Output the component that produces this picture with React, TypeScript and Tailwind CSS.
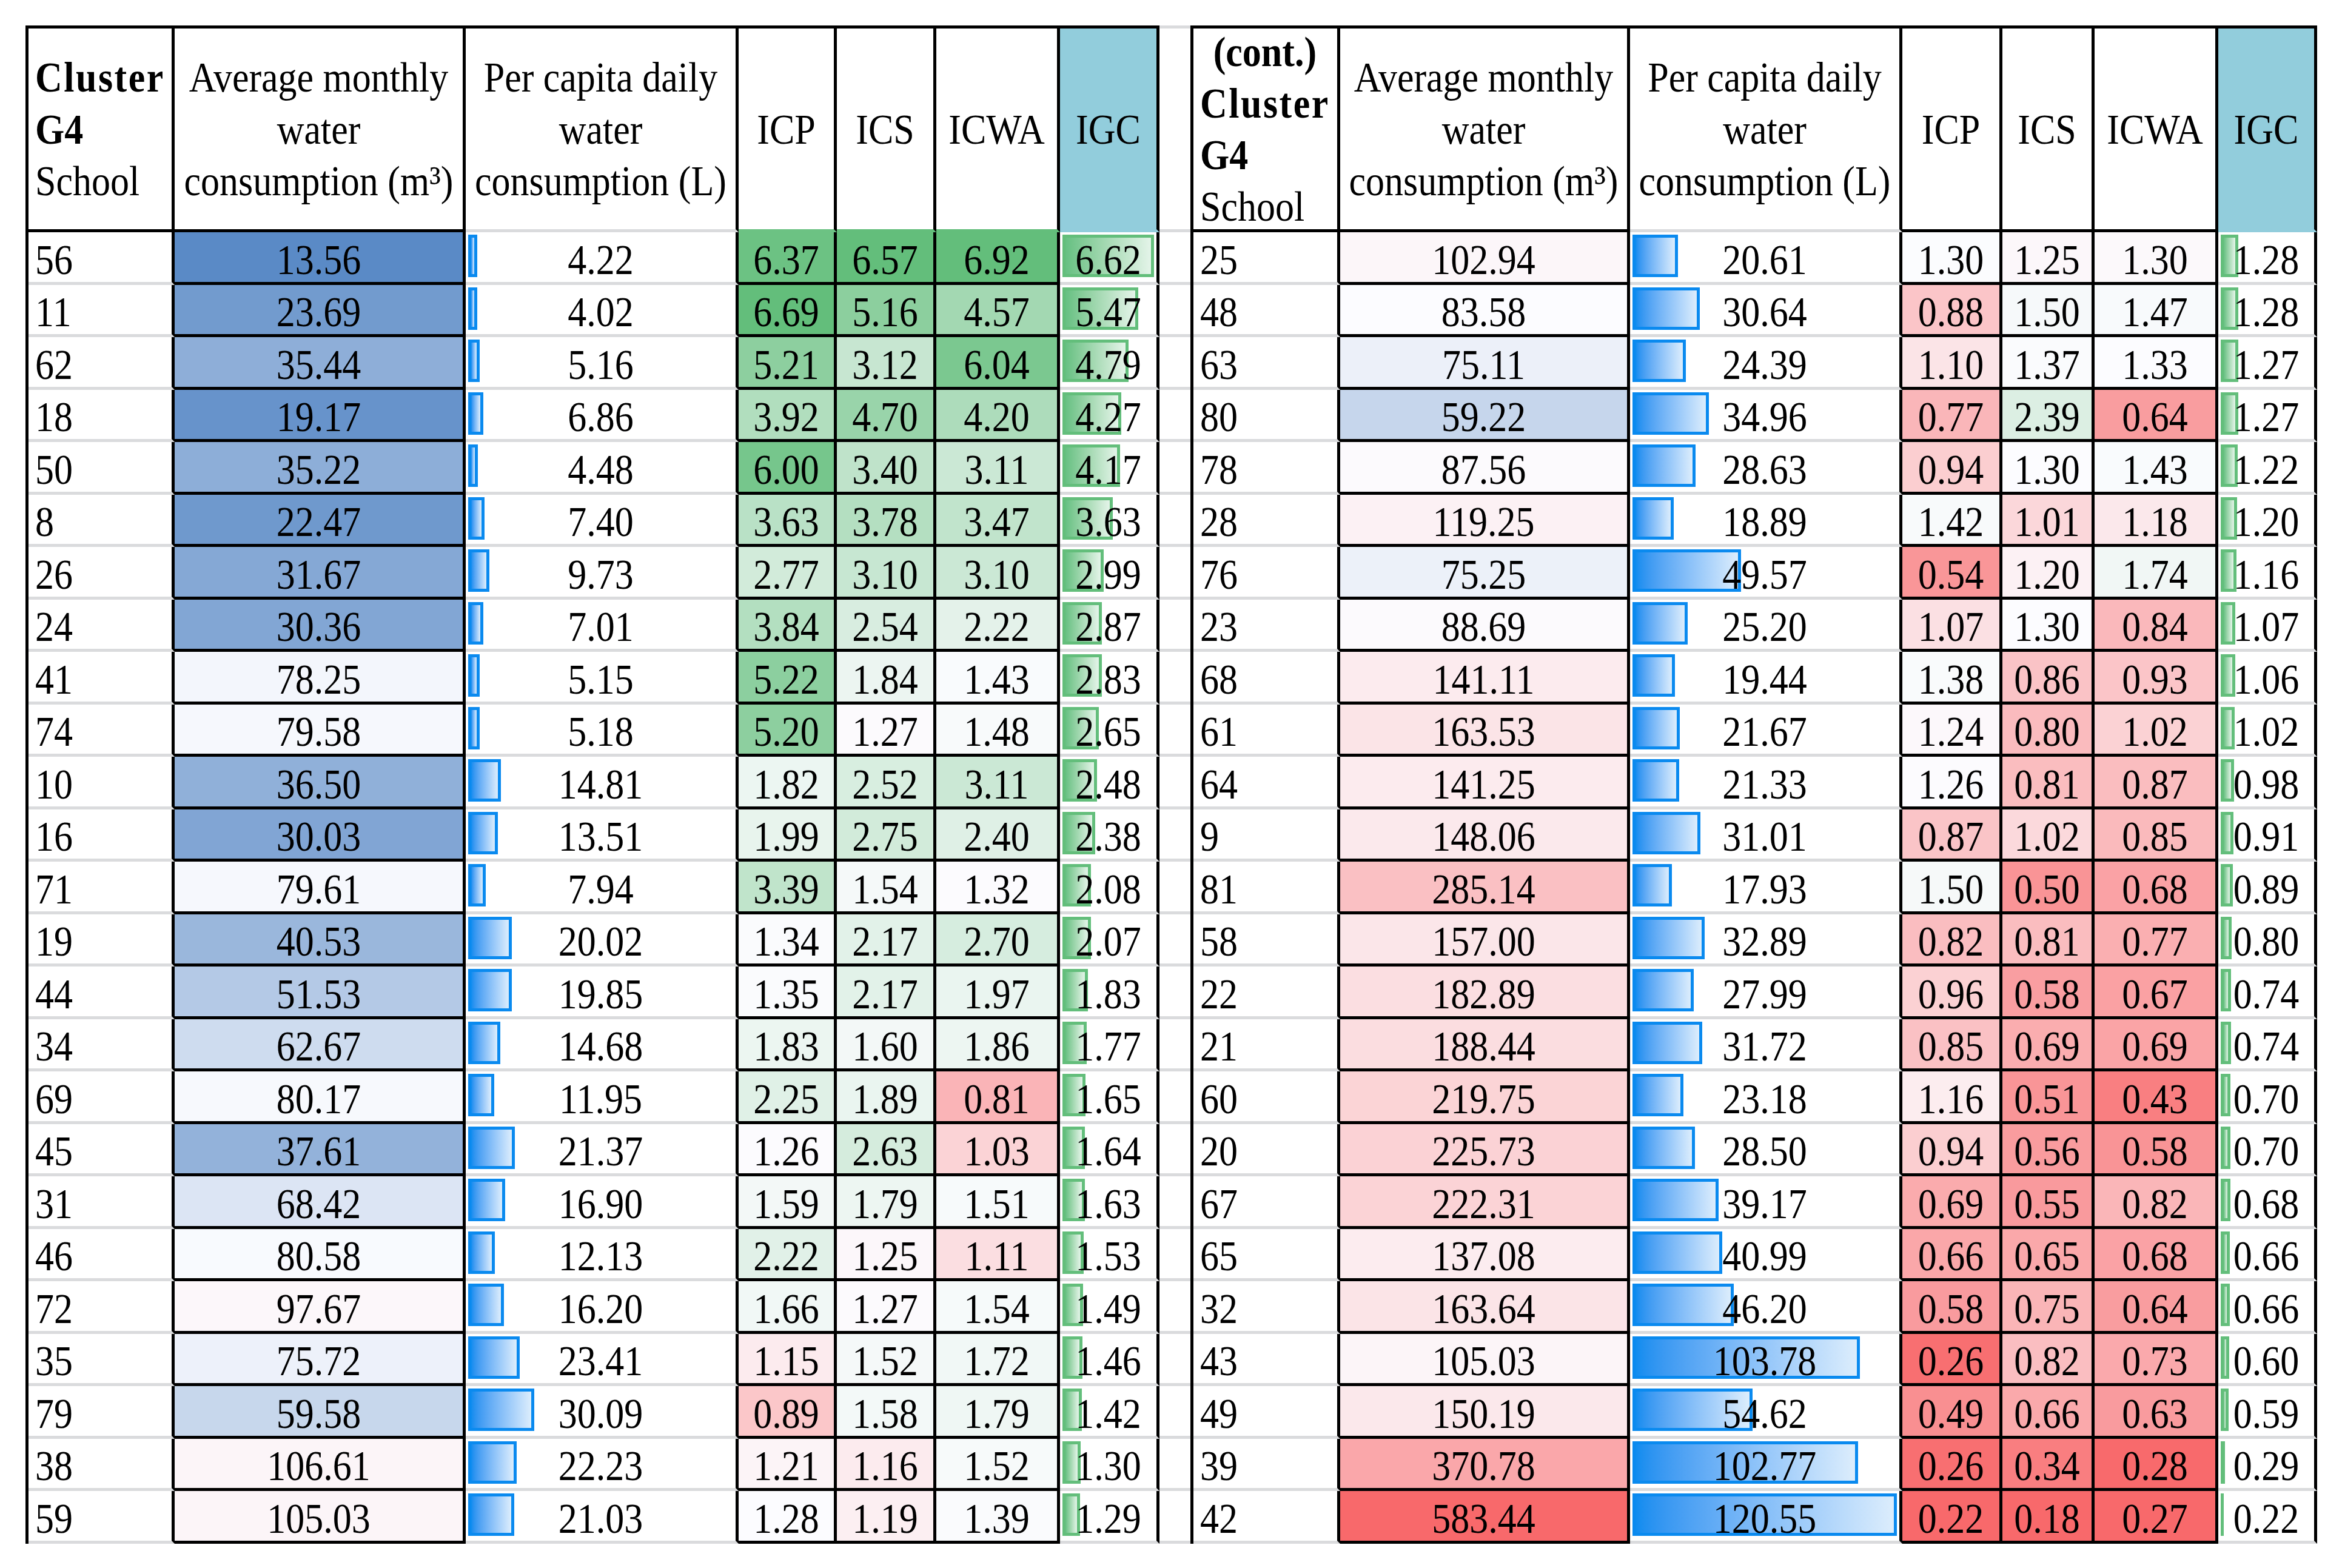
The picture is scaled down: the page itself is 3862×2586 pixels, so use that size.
import React from "react";

type Row = [string, number, number, number, number, number, number];

const T1: Row[] = [
  ["56", 13.56, 4.22, 6.37, 6.57, 6.92, 6.62],
  ["11", 23.69, 4.02, 6.69, 5.16, 4.57, 5.47],
  ["62", 35.44, 5.16, 5.21, 3.12, 6.04, 4.79],
  ["18", 19.17, 6.86, 3.92, 4.7, 4.2, 4.27],
  ["50", 35.22, 4.48, 6.0, 3.4, 3.11, 4.17],
  ["8", 22.47, 7.4, 3.63, 3.78, 3.47, 3.63],
  ["26", 31.67, 9.73, 2.77, 3.1, 3.1, 2.99],
  ["24", 30.36, 7.01, 3.84, 2.54, 2.22, 2.87],
  ["41", 78.25, 5.15, 5.22, 1.84, 1.43, 2.83],
  ["74", 79.58, 5.18, 5.2, 1.27, 1.48, 2.65],
  ["10", 36.5, 14.81, 1.82, 2.52, 3.11, 2.48],
  ["16", 30.03, 13.51, 1.99, 2.75, 2.4, 2.38],
  ["71", 79.61, 7.94, 3.39, 1.54, 1.32, 2.08],
  ["19", 40.53, 20.02, 1.34, 2.17, 2.7, 2.07],
  ["44", 51.53, 19.85, 1.35, 2.17, 1.97, 1.83],
  ["34", 62.67, 14.68, 1.83, 1.6, 1.86, 1.77],
  ["69", 80.17, 11.95, 2.25, 1.89, 0.81, 1.65],
  ["45", 37.61, 21.37, 1.26, 2.63, 1.03, 1.64],
  ["31", 68.42, 16.9, 1.59, 1.79, 1.51, 1.63],
  ["46", 80.58, 12.13, 2.22, 1.25, 1.11, 1.53],
  ["72", 97.67, 16.2, 1.66, 1.27, 1.54, 1.49],
  ["35", 75.72, 23.41, 1.15, 1.52, 1.72, 1.46],
  ["79", 59.58, 30.09, 0.89, 1.58, 1.79, 1.42],
  ["38", 106.61, 22.23, 1.21, 1.16, 1.52, 1.3],
  ["59", 105.03, 21.03, 1.28, 1.19, 1.39, 1.29],
];

const T2: Row[] = [
  ["25", 102.94, 20.61, 1.3, 1.25, 1.3, 1.28],
  ["48", 83.58, 30.64, 0.88, 1.5, 1.47, 1.28],
  ["63", 75.11, 24.39, 1.1, 1.37, 1.33, 1.27],
  ["80", 59.22, 34.96, 0.77, 2.39, 0.64, 1.27],
  ["78", 87.56, 28.63, 0.94, 1.3, 1.43, 1.22],
  ["28", 119.25, 18.89, 1.42, 1.01, 1.18, 1.2],
  ["76", 75.25, 49.57, 0.54, 1.2, 1.74, 1.16],
  ["23", 88.69, 25.2, 1.07, 1.3, 0.84, 1.07],
  ["68", 141.11, 19.44, 1.38, 0.86, 0.93, 1.06],
  ["61", 163.53, 21.67, 1.24, 0.8, 1.02, 1.02],
  ["64", 141.25, 21.33, 1.26, 0.81, 0.87, 0.98],
  ["9", 148.06, 31.01, 0.87, 1.02, 0.85, 0.91],
  ["81", 285.14, 17.93, 1.5, 0.5, 0.68, 0.89],
  ["58", 157.0, 32.89, 0.82, 0.81, 0.77, 0.8],
  ["22", 182.89, 27.99, 0.96, 0.58, 0.67, 0.74],
  ["21", 188.44, 31.72, 0.85, 0.69, 0.69, 0.74],
  ["60", 219.75, 23.18, 1.16, 0.51, 0.43, 0.7],
  ["20", 225.73, 28.5, 0.94, 0.56, 0.58, 0.7],
  ["67", 222.31, 39.17, 0.69, 0.55, 0.82, 0.68],
  ["65", 137.08, 40.99, 0.66, 0.65, 0.68, 0.66],
  ["32", 163.64, 46.2, 0.58, 0.75, 0.64, 0.66],
  ["43", 105.03, 103.78, 0.26, 0.82, 0.73, 0.6],
  ["49", 150.19, 54.62, 0.49, 0.66, 0.63, 0.59],
  ["39", 370.78, 102.77, 0.26, 0.34, 0.28, 0.29],
  ["42", 583.44, 120.55, 0.22, 0.18, 0.27, 0.22],
];

const ALL = [...T1, ...T2];

type RGB = [number, number, number];
const hex = (h: string): RGB => [
  parseInt(h.slice(1, 3), 16),
  parseInt(h.slice(3, 5), 16),
  parseInt(h.slice(5, 7), 16),
];
const mix = (a: RGB, b: RGB, t: number): string => {
  const c = a.map((x, i) => Math.round(x + (b[i] - x) * Math.max(0, Math.min(1, t))));
  return `rgb(${c[0]}, ${c[1]}, ${c[2]})`;
};
const percentile = (vals: number[], p: number) => {
  const s = [...vals].sort((a, b) => a - b);
  const k = (s.length - 1) * p;
  const f = Math.floor(k);
  const c = Math.ceil(k);
  return s[f] + (s[c] - s[f]) * (k - f);
};

const BLUE = hex("#5a8ac6");
const WHITE = hex("#fcfcff");
const RED = hex("#f8696b");
const GREEN = hex("#63be7b");

function makeScale(col: number, lo: RGB, hi: RGB) {
  const vals = ALL.map((r) => r[col]);
  const min = Math.min(...vals);
  const max = Math.max(...vals);
  const mid = percentile(vals, 0.5);
  return (v: number) =>
    v <= mid ? mix(lo, WHITE, (v - min) / (mid - min)) : mix(WHITE, hi, (v - mid) / (max - mid));
}

const scales: Record<number, (v: number) => string> = {
  1: makeScale(1, BLUE, RED),
  3: makeScale(3, RED, GREEN),
  4: makeScale(4, RED, GREEN),
  5: makeScale(5, RED, GREEN),
};

const BLUE_MAX = Math.max(...ALL.map((r) => r[2]));
const GREEN_MAX = Math.max(...ALL.map((r) => r[6]));

const W1 = ["w-[241px]", "w-[480px]", "w-[450px]", "w-[162px]", "w-[164px]", "w-[204px]", "w-[164px]"];
const W2 = ["w-[242px]", "w-[478px]", "w-[449px]", "w-[165px]", "w-[152px]", "w-[204px]", "w-[163px]"];

const ROW_B = [
  "border-b-[#dadbdd]",
  "border-b-black",
  "border-b-[#dadbdd]",
  "border-b-black",
  "border-b-black",
  "border-b-black",
  "border-b-[#dadbdd]",
];

const NUM = "relative inline-block scale-y-[1.12] text-[62px] leading-none";
const HEAD = "scale-y-[1.12] text-[62px] leading-[76px]";

function HeaderRow({ widths, cont, first }: { widths: string[]; cont?: boolean; first?: Row }) {
  const idx = (c: number) =>
    first ? { borderBottomColor: scales[c](first[c]) } : undefined;
  const base = "flex h-full shrink-0 items-center border-r-[5px] border-b-[5px] border-r-black";
  return (
    <div className="flex h-[336px]">
      <div className={`${base} ${widths[0]} border-b-black justify-start pl-[11px]`}>
        <div className={`${HEAD} text-left`}>
          {cont && <div className="text-center font-bold">(cont.)</div>}
          <div className="font-bold tracking-[2.5px]">Cluster</div>
          <div className="font-bold">G4</div>
          <div>School</div>
        </div>
      </div>
      <div className={`${base} ${widths[1]} border-b-black justify-center`}>
        <div className={`${HEAD} text-center`}>
          <div>Average monthly</div>
          <div>water</div>
          <div>consumption (m³)</div>
        </div>
      </div>
      <div className={`${base} ${widths[2]} border-b-[#dadbdd] justify-center`}>
        <div className={`${HEAD} text-center`}>
          <div>Per capita daily</div>
          <div>water</div>
          <div>consumption (L)</div>
        </div>
      </div>
      {["ICP", "ICS", "ICWA"].map((t, i) => (
        <div key={t} className={`${base} ${widths[3 + i]} border-b-black justify-center`} style={idx(3 + i)}>
          <div className={`${HEAD} text-center`}>{t}</div>
        </div>
      ))}
      <div className={`${base} ${widths[6]} border-b-[#92cddc] bg-[#92cddc] justify-center`}>
        <div className={`${HEAD} text-center`}>IGC</div>
      </div>
    </div>
  );
}

function BlueBar({ v }: { v: number }) {
  const w = (v / BLUE_MAX) * 436;
  return (
    <div
      className="absolute left-[4px] top-[4px] h-[70px] border-[5px] border-[#0a8aef] bg-linear-to-r from-[#0d8cef] to-[#dcedfc]"
      style={{ width: Math.max(w, 11) }}
    />
  );
}

function GreenBar({ v }: { v: number }) {
  const w = (v / GREEN_MAX) * 151;
  if (w < 10) {
    return <div className="absolute left-[4px] top-[4px] h-[70px] bg-[#63be7b]" style={{ width: Math.max(w, 5) }} />;
  }
  return (
    <div
      className="absolute left-[4px] top-[4px] h-[70px] border-[5px] border-[#63be7b] bg-linear-to-r from-[#66c082] to-[#e4f4e9]"
      style={{ width: w }}
    />
  );
}

function DataRow({ r, widths }: { r: Row; widths: string[] }) {
  const base = "relative flex h-full shrink-0 items-center border-r-[5px] border-b-[5px] border-r-black pt-[8px]";
  return (
    <div className="flex h-[86.5px]">
      <div className={`${base} ${widths[0]} ${ROW_B[0]} justify-start pl-[11px]`}>
        <span className={NUM}>{r[0]}</span>
      </div>
      <div className={`${base} ${widths[1]} ${ROW_B[1]} justify-center`} style={{ backgroundColor: scales[1](r[1]) }}>
        <span className={NUM}>{r[1].toFixed(2)}</span>
      </div>
      <div className={`${base} ${widths[2]} ${ROW_B[2]} justify-center`}>
        <BlueBar v={r[2]} />
        <span className={NUM}>{r[2].toFixed(2)}</span>
      </div>
      {[3, 4, 5].map((c) => (
        <div key={c} className={`${base} ${widths[c]} ${ROW_B[c]} justify-center`} style={{ backgroundColor: scales[c](r[c]) }}>
          <span className={NUM}>{r[c].toFixed(2)}</span>
        </div>
      ))}
      <div className={`${base} ${widths[6]} ${ROW_B[6]} justify-center`}>
        <GreenBar v={r[6]} />
        <span className={NUM}>{r[6].toFixed(2)}</span>
      </div>
    </div>
  );
}

function Table({ rows, widths, cont, coverHeader }: { rows: Row[]; widths: string[]; cont?: boolean; coverHeader?: boolean }) {
  return (
    <div className="flex shrink-0 flex-col border-l-[5px] border-t-[5px] border-black">
      <HeaderRow widths={widths} cont={cont} first={coverHeader ? rows[0] : undefined} />
      {rows.map((r) => (
        <DataRow key={r[0]} r={r} widths={widths} />
      ))}
    </div>
  );
}

function Gap() {
  return (
    <div className="flex w-[51px] shrink-0 flex-col border-t-[5px] border-[#dadbdd]">
      <div className="h-[336px] border-b-[5px] border-[#dadbdd]" />
      {T1.map((r) => (
        <div key={r[0]} className="h-[86.5px] border-b-[5px] border-[#dadbdd]" />
      ))}
    </div>
  );
}

export default function App() {
  return (
    <div className="flex h-[2586px] w-[3862px] items-start bg-white pl-[42px] pt-[42px] font-['Liberation_Serif','Times_New_Roman',serif] text-black">
      <Table rows={T1} widths={W1} coverHeader />
      <Gap />
      <Table rows={T2} widths={W2} cont />
    </div>
  );
}
